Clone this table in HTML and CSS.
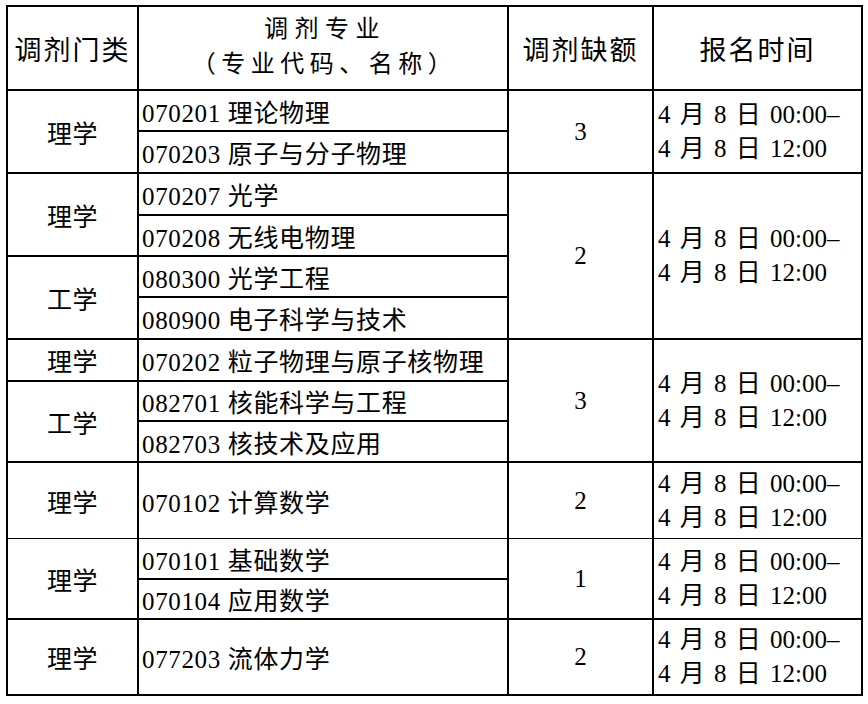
FILE: index.html
```html
<!DOCTYPE html>
<html lang="zh-CN">
<head>
<meta charset="utf-8">
<title>调剂专业</title>
<link rel="stylesheet" href="styles.css">
</head>
<body>
<table class="grid">
  <colgroup>
    <col class="c1"><col class="c2"><col class="c3"><col class="c4">
  </colgroup>
  <tr class="r84 head">
    <th>调剂门类</th>
    <th class="two"><span class="line l1">调剂专业</span><span class="line l2">（专业代码、名称）</span></th>
    <th>调剂缺额</th>
    <th>报名时间</th>
  </tr>
  <tr class="r41">
    <td class="cat" rowspan="2">理学</td>
    <td class="major">070201 理论物理</td>
    <td class="num" rowspan="2">3</td>
    <td class="time" rowspan="2">4 月 8 日 00:00–<br>4 月 8 日 12:00</td>
  </tr>
  <tr class="r42">
    <td class="major">070203 原子与分子物理</td>
  </tr>
  <tr class="r42">
    <td class="cat" rowspan="2">理学</td>
    <td class="major">070207 光学</td>
    <td class="num" rowspan="4">2</td>
    <td class="time" rowspan="4">4 月 8 日 00:00–<br>4 月 8 日 12:00</td>
  </tr>
  <tr class="r41">
    <td class="major">070208 无线电物理</td>
  </tr>
  <tr class="r41">
    <td class="cat" rowspan="2">工学</td>
    <td class="major">080300 光学工程</td>
  </tr>
  <tr class="r42">
    <td class="major">080900 电子科学与技术</td>
  </tr>
  <tr class="r42">
    <td class="cat">理学</td>
    <td class="major">070202 粒子物理与原子核物理</td>
    <td class="num" rowspan="3">3</td>
    <td class="time" rowspan="3">4 月 8 日 00:00–<br>4 月 8 日 12:00</td>
  </tr>
  <tr class="r40">
    <td class="cat" rowspan="2">工学</td>
    <td class="major">082701 核能科学与工程</td>
  </tr>
  <tr class="r41">
    <td class="major">082703 核技术及应用</td>
  </tr>
  <tr class="r76">
    <td class="cat thin">理学</td>
    <td class="major thin">070102 计算数学</td>
    <td class="num thin">2</td>
    <td class="time thin">4 月 8 日 00:00–<br>4 月 8 日 12:00</td>
  </tr>
  <tr class="r41">
    <td class="cat" rowspan="2">理学</td>
    <td class="major">070101 基础数学</td>
    <td class="num" rowspan="2">1</td>
    <td class="time" rowspan="2">4 月 8 日 00:00–<br>4 月 8 日 12:00</td>
  </tr>
  <tr class="r40">
    <td class="major">070104 应用数学</td>
  </tr>
  <tr class="r76">
    <td class="cat">理学</td>
    <td class="major">077203 流体力学</td>
    <td class="num">2</td>
    <td class="time">4 月 8 日 00:00–<br>4 月 8 日 12:00</td>
  </tr>
</table>
</body>
</html>
```

FILE: styles.css
```css
html, body {
  margin: 0;
  padding: 0;
  background: #fff;
}

body {
  padding: 5px 0 0 6px;
  color: #000;
  font-family: "Liberation Serif", "Noto Sans CJK SC", serif;
  font-size: 25px;
}

.grid {
  border-collapse: separate;
  border-spacing: 0;
  border-left: 2px solid #000;
  border-top: 2px solid #000;
  table-layout: fixed;
  width: 857px;
}

.c1 { width: 131px; }
.c2 { width: 370px; }
.c3 { width: 145px; }
.c4 { width: 209px; }

.grid th,
.grid td {
  box-sizing: border-box;
  border-right: 2px solid #000;
  border-bottom: 2px solid #000;
  padding: 0;
  vertical-align: middle;
}

.grid th {
  font-family: "Noto Sans CJK SC", sans-serif;
  font-weight: normal;
  font-size: 27px;
  letter-spacing: 2px;
  text-align: center;
  line-height: 35px;
}

.grid th.two {
  padding-bottom: 8px;
  font-size: 24px;
}

.line {
  display: block;
  height: 35px;
  line-height: 35px;
}

.l1 {
  letter-spacing: 6.5px;
  padding-left: 4px;
}

.l2 {
  letter-spacing: 5.5px;
  padding-left: 3px;
}

.r84 { height: 84px; }
.r42 { height: 42px; }
.r41 { height: 41px; }
.r40 { height: 40px; }
.r76 { height: 76px; }

.cat {
  text-align: center;
  letter-spacing: 0.5px;
}

.major {
  padding-left: 3px !important;
  text-align: left;
  white-space: nowrap;
  letter-spacing: 0.65px;
}

.num {
  text-align: center;
}

.time {
  padding-left: 4px !important;
  text-align: left;
  line-height: 34px;
  white-space: nowrap;
  word-spacing: 3px;
}

.grid td.thin {
  border-bottom-width: 1px;
}
```
